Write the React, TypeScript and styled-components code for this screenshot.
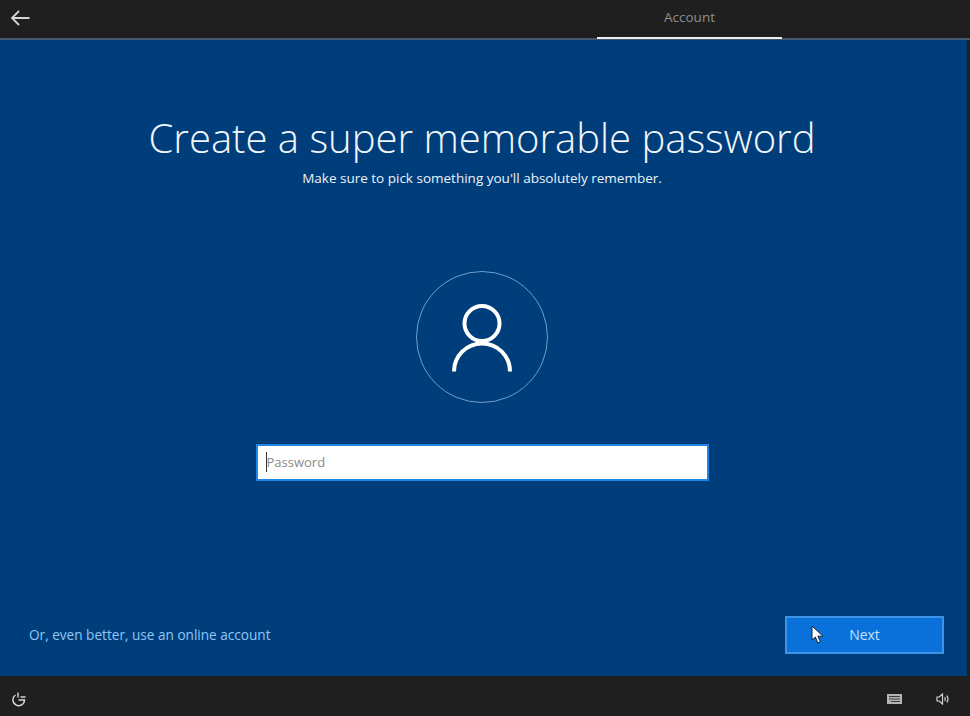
import React from 'react'
import styled, { createGlobalStyle } from 'styled-components'

const GlobalStyle = createGlobalStyle`
  html, body {
    margin: 0;
    padding: 0;
    background: #1f1f1f;
    overflow: hidden;
  }
`

const Page = styled.div`
  width: 970px;
  height: 716px;
  display: flex;
  flex-direction: column;
  font-family: "Open Sans", "Liberation Sans", sans-serif;
  background: #1f1f1f;
`

const TopBar = styled.header`
  height: 38px;
  flex: none;
  display: flex;
  align-items: stretch;
  padding-left: 10px;
  border-bottom: 2px solid #47586a;
`

const BackButton = styled.div`
  width: 20px;
  padding-bottom: 3px;
  display: flex;
  align-items: center;
`

const Tab = styled.div`
  margin-left: 567px;
  width: 185px;
  padding-bottom: 4px;
  display: flex;
  align-items: center;
  justify-content: center;
  font-size: 13.5px;
  color: #8e8e8e;
  position: relative;

  &::after {
    content: '';
    position: absolute;
    left: 0;
    right: 0;
    bottom: -1px;
    height: 2px;
    background: #e8eef4;
  }
`

const Main = styled.main`
  flex: 1;
  margin-right: 3px;
  background: #003e7b;
  display: flex;
  flex-direction: column;
  align-items: center;
  padding: 0 3px 22px 0;
  min-height: 0;
`

const Title = styled.h1`
  margin: 67px 0 0;
  height: 62px;
  font-size: 40px;
  line-height: 62px;
  font-weight: 300;
  color: #f2f6fa;
  white-space: nowrap;
`

const Subtitle = styled.p`
  margin: 0;
  height: 18px;
  font-size: 13.5px;
  line-height: 18px;
  color: #edf2f7;
  white-space: nowrap;
`

const Avatar = styled.div`
  margin-top: 84px;
  width: 132px;
  height: 132px;
  box-sizing: border-box;
  border: 1.5px solid #6f9ecb;
  border-radius: 50%;
  display: flex;
  align-items: center;
  justify-content: center;
`

const PasswordField = styled.div`
  margin-top: 41px;
  width: 453px;
  height: 37px;
  box-sizing: border-box;
  background: #fff;
  border: 2px solid #1f86e6;
  display: flex;
  align-items: center;
  padding: 0 0 2px 8px;
  font-size: 13px;
  color: #8a8a8a;
`

const Caret = styled.span`
  width: 1px;
  height: 20px;
  background: #333;
  flex: none;
`

const BottomRow = styled.div`
  margin: auto 20px 0 29px;
  align-self: stretch;
  display: flex;
  align-items: center;
  justify-content: space-between;
`

const OnlineLink = styled.a`
  padding-bottom: 2px;
  font-size: 13.6px;
  color: #8fc6f5;
`

const NextButton = styled.div`
  position: relative;
  width: 159px;
  height: 38px;
  box-sizing: border-box;
  background: #0a70da;
  border: 2px solid #3f93e6;
  padding-bottom: 2px;
  display: flex;
  align-items: center;
  justify-content: center;
  font-size: 14px;
  color: #c2e2ff;
`

const Pointer = styled.svg`
  position: absolute;
  left: 24px;
  top: 7px;
`

const Footer = styled.footer`
  height: 34px;
  padding: 6px 20px 0 11px;
  flex: none;
  display: flex;
  align-items: center;
`

const FooterIcon = styled.svg`
  display: block;
  flex: none;
`

const Spacer = styled.div`
  flex: 1;
`

const FooterGap = styled.div`
  width: 34px;
  flex: none;
`

export default function App() {
  return (
    <Page>
      <GlobalStyle />
      <TopBar>
        <BackButton>
          <svg width="20" height="16" viewBox="0 0 20 16" fill="none" stroke="#d4d4d4" strokeWidth="1.8">
            <path d="M19.500 8H2M9 1 2 8l7 7" />
          </svg>
        </BackButton>
        <Tab>Account</Tab>
      </TopBar>
      <Main>
        <Title>Create a super memorable password</Title>
        <Subtitle>Make sure to pick something you'll absolutely remember.</Subtitle>
        <Avatar>
          <svg width="60" height="70" viewBox="0 0 60 70" fill="none" stroke="#fff" strokeWidth="4">
            <circle cx="30" cy="21.500" r="17.500" />
            <path d="M2 69.500c0-15.500 12.500-28 28-28s28 12.500 28 28" />
          </svg>
        </Avatar>
        <PasswordField>
          <Caret />
          Password
        </PasswordField>
        <BottomRow>
          <OnlineLink>Or, even better, use an online account</OnlineLink>
          <NextButton>
            <Pointer width="13" height="19" viewBox="0 0 13 19">
              <path d="M1 1v14l3.400-3 2.400 6 2.600-1-2.500-5.800H12z" fill="#fff" stroke="#10233a" strokeWidth="1" />
            </Pointer>
            Next
          </NextButton>
        </BottomRow>
      </Main>
      <Footer>
        <FooterIcon width="16" height="15" viewBox="0 0 16 15" fill="none" stroke="#d8d8d8" strokeWidth="1.4">
          <path d="M4.500 3a5.800 5.800 0 1 0 9 5H7.500" />
          <path d="M7 0.500v5M9.500 5h5" />
        </FooterIcon>
        <Spacer />
        <FooterIcon width="15" height="10" viewBox="0 0 15 10">
          <rect x="0" y="0" width="15" height="10" fill="#b4b4b4" />
          <path d="M2 2h11v1H2zM2 4.500h11v1H2zM4 7h9v1H4z" fill="#3a3a3a" />
        </FooterIcon>
        <FooterGap />
        <FooterIcon width="14" height="12" viewBox="0 0 14 12" fill="none" stroke="#d0d0d0" strokeWidth="1.2">
          <path d="M1 4h2.200L6.500 1v10L3.200 8H1z" />
          <path d="M8.800 4c.6 1.300.6 2.700 0 4M11 2.500c1.200 2.200 1.200 4.800 0 7" />
        </FooterIcon>
      </Footer>
    </Page>
  )
}
